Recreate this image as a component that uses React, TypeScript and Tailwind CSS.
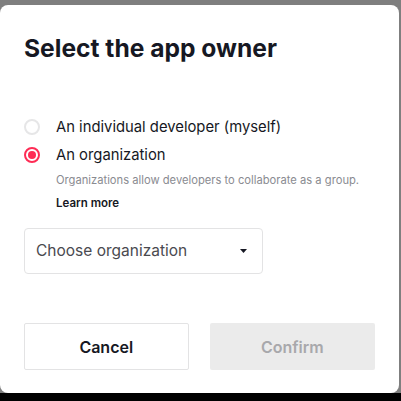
import { useState } from "react";

const OPTIONS = [
  { id: "individual", label: "An individual developer (myself)" },
  { id: "org", label: "An organization" },
];

function Radio({ checked }: { checked: boolean }) {
  return checked ? (
    <span className="flex h-4 w-4 shrink-0 items-center justify-center rounded-full border-2 border-[#fe2c55]">
      <span className="h-2 w-2 rounded-full bg-[#fe2c55]" />
    </span>
  ) : (
    <span className="h-4 w-4 shrink-0 rounded-full border-2 border-[#e6e6e7]" />
  );
}

export default function App() {
  const [owner, setOwner] = useState("org");

  return (
    <div className="flex h-[401px] w-[401px] flex-col bg-[#7f7f7f] font-['Inter',sans-serif]">
      <div className="mt-[5px] flex w-[399px] flex-col rounded-[8px] bg-white px-6 pt-[27px] pb-[23px]">
        <h1 className="text-[24.6px] leading-[32px] font-bold text-[#161823]">
          Select the app owner
        </h1>

        <div className="mt-[53px] flex flex-col gap-2">
          {OPTIONS.map((o) => (
            <button
              key={o.id}
              onClick={() => setOwner(o.id)}
              className="flex h-5 items-center gap-4 text-left text-[14.8px] text-[#161823]"
            >
              <Radio checked={owner === o.id} />
              <span>{o.label}</span>
            </button>
          ))}
        </div>

        <div className="pl-8">
          <p className="mt-1.5 text-[11.2px] leading-[18px] whitespace-nowrap text-[#8a8b91]">
            Organizations allow developers to collaborate as a group.
          </p>
          <a className="mt-[5px] block text-[11.5px] leading-[18px] font-semibold text-[#161823]">
            Learn more
          </a>
        </div>

        <button className="mt-4 flex h-[46px] w-[239px] items-center justify-between rounded-[4px] border border-[#e3e3e4] pr-[15px] pl-[11px] text-[15.5px] text-[#4a4a4f]">
          <span>Choose organization</span>
          <svg width="7" height="4" viewBox="0 0 7 4">
            <path d="M0 0h7L3.5 4z" fill="#161823" />
          </svg>
        </button>

        <div className="mt-[49px] flex gap-[21px]">
          <button className="h-[47px] w-[165px] rounded-[2px] border border-[#e3e3e4] text-[16px] font-semibold text-[#161823]">
            Cancel
          </button>
          <button
            disabled
            className="h-[47px] w-[166px] rounded-[2px] bg-[#ebebeb] text-[16px] font-semibold text-[#a8a8ab]"
          >
            Confirm
          </button>
        </div>
      </div>
      <div className="flex-1 bg-black" />
    </div>
  );
}
